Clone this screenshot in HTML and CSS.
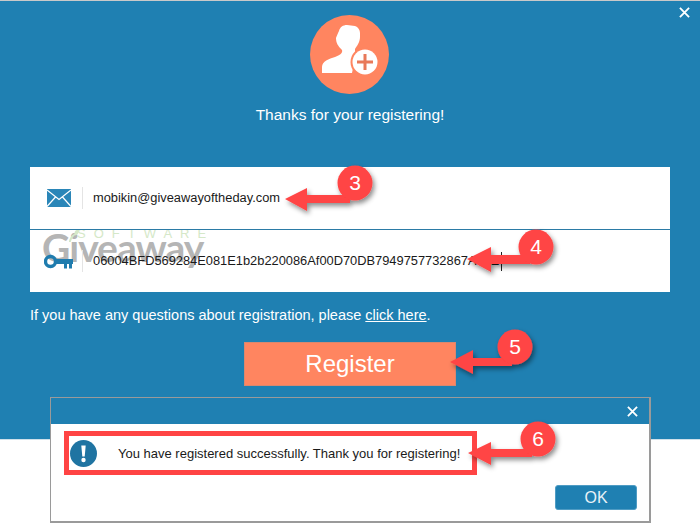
FILE: index.html
```html
<!DOCTYPE html>
<html>
<head>
    <meta name="viewport" content="width=device-width, initial-scale=1.0" />
    <meta charset="UTF-8" />
    <title>Register</title>
    <link rel="stylesheet" href="styles.css">
</head>
<body>
    <div class="window">
        <svg class="close main-close" viewBox="0 0 12 12"><path d="M1 1 L11 11 M11 1 L1 11"/></svg>
        <svg class="avatar" viewBox="310 15 80 80">
            <circle cx="349.5" cy="54.5" r="39.5" fill="#ff8560"/>
            <path fill="#fff" d="M322 73 V67 C322 61 329 59 335 57 C340 55 343 53 342 50 C338 46 336 43 336 38 C337 35 338 33 339 31 C340 27 343 25 347 25 C350 25 352 26 355 26 C358 27 360 30 360 33 V37 C360 42 357 46 355 49 L355 58 L352 73 Z"/>
            <circle cx="365" cy="62" r="14.5" fill="#ff8560"/>
            <circle cx="365" cy="62" r="12.5" fill="#fff"/>
            <path fill="none" stroke="#e8795a" stroke-width="3" d="M365 54 V70 M357 62 H373"/>
        </svg>
        <h1 class="title">Thanks for your registering!</h1>
        <div class="panel">
            <div class="watermark">
                <svg class="wm-leaf" viewBox="0 0 12 14"><path d="M1 14 C2 8 5 6 7 5 C7 2 9 1 12 0 C12 4 11 7 7 7 C5 9 4 11 3 14 Z"/></svg>
                <span class="wm-top">SOFTWARE</span>
                <span class="wm-name">Giveaway</span>
            </div>
            <div class="row">
                <svg class="row-icon" viewBox="0 0 24 18">
                    <rect width="24" height="18" fill="#2a86b8"/>
                    <path fill="none" stroke="#fff" stroke-width="1.2" d="M0 1 L12 10.5 L24 1 M0 17.5 L8.5 8 M24 17.5 L15.5 8"/>
                </svg>
                <span class="sep"></span>
                <span class="value">mobikin@giveawayoftheday.com</span>
            </div>
            <div class="row row-key">
                <svg class="row-icon key" viewBox="0 0 29 15">
                    <circle cx="6.5" cy="7.5" r="5" fill="none" stroke="#1f7cae" stroke-width="3.4"/>
                    <path fill="#1f7cae" d="M11 5 H29 V10 H28 V14.5 H25 V10 H23 V14.5 H20 V10 H11 Z"/>
                </svg>
                <span class="sep"></span>
                <span class="value">06004BFD569284E081E1b2b220086Af00D70DB7949757732867A72E</span>
                <span class="caret"></span>
            </div>
        </div>
        <p class="help">If you have any questions about registration, please <a href="#">click here</a>.</p>
        <button class="register" type="button">Register</button>
    </div>

    <div class="dialog">
        <div class="dialog-bar">
            <svg class="close" viewBox="0 0 12 12"><path d="M1 1 L11 11 M11 1 L1 11"/></svg>
        </div>
        <div class="dialog-body">
            <div class="message">
                <svg class="info" viewBox="0 0 27 27">
                    <circle cx="13.5" cy="13.5" r="13.5" fill="#1f74a2"/>
                    <path fill="#fff" d="M11.3 5.5 H15.7 L14.7 16.5 H12.3 Z"/>
                    <circle cx="13.5" cy="20" r="2.2" fill="#fff"/>
                </svg>
                <span>You have registered successfully. Thank you for registering!</span>
            </div>
            <div class="dialog-foot">
                <button class="ok" type="button">OK</button>
            </div>
        </div>
    </div>

    <!-- callouts drawn on top of the screenshot -->
    <svg class="callouts" viewBox="0 0 700 523">
        <defs>
            <filter id="shade" x="-30%" y="-30%" width="170%" height="170%">
                <feDropShadow dx="2" dy="3" stdDeviation="2.5" flood-color="#000" flood-opacity="0.45"/>
            </filter>
        </defs>
        <g filter="url(#shade)">
            <path d="M285 199 L307 188 V195 H350 V203 H307 V211 Z"/>
            <circle cx="355" cy="183" r="17.5"/>
        </g>
        <text x="355" y="190">3</text>
        <g filter="url(#shade)">
            <path d="M467 259 L491 247 V255 H530 V264 H491 V272 Z"/>
            <circle cx="536" cy="247" r="17.5"/>
        </g>
        <text x="536" y="254">4</text>
        <g filter="url(#shade)">
            <path d="M450 362 L473 350 V358 H512 V366 H473 V374 Z"/>
            <circle cx="515" cy="347" r="17.5"/>
        </g>
        <text x="515" y="354">5</text>
        <g filter="url(#shade)">
            <path d="M468 453 L491 442 V449 H532 V457 H491 V465 Z"/>
            <circle cx="538" cy="439" r="17.5"/>
        </g>
        <text x="538" y="446">6</text>
    </svg>
</body>
</html>
```

FILE: styles.css
```css
* {
    box-sizing: border-box;
}
body {
    margin: 0;
    position: relative;
    width: 700px;
    height: 523px;
    overflow: hidden;
    background-color: #ffffff;
    font-family: 'Liberation Sans', Arial, sans-serif;
}
svg {
    display: block;
}
.window {
    position: relative;
    display: flex;
    flex-direction: column;
    align-items: center;
    height: 440px;
    padding: 14px 30px 0;
    background-color: #1f80b2;
    border-top: 1px solid #c9c9c9;
    border-bottom: 1px solid #cfe0ea;
}
.close {
    width: 11px;
    height: 11px;
    fill: none;
    stroke: #ffffff;
    stroke-width: 2;
}
.main-close {
    position: absolute;
    top: 6px;
    right: 10px;
}
.avatar {
    width: 80px;
    height: 80px;
}
.title {
    margin: 10px 0 0;
    font-size: 15.5px;
    line-height: 20px;
    font-weight: normal;
    color: #ffffff;
}
.panel {
    position: relative;
    width: 640px;
    margin-top: 42px;
    background-color: #ffffff;
}
.row {
    position: relative;
    display: flex;
    align-items: center;
    height: 62px;
    padding-left: 17px;
}
.row-key {
    height: 63px;
    border-top: 1px solid #2b7ba6;
    padding-left: 14px;
}
.row-icon {
    width: 24px;
    height: 18px;
    margin-right: 11px;
}
.key {
    width: 29px;
    height: 15px;
    margin-right: 9px;
}
.sep {
    width: 1px;
    height: 22px;
    background-color: #e4e4e4;
}
.value {
    margin-left: 10px;
    margin-bottom: 2px;
    font-size: 12.85px;
    color: #1a1a1a;
}
.caret {
    width: 1px;
    height: 19px;
    margin-left: 2px;
    background-color: #222222;
}
.watermark {
    position: absolute;
    left: 12px;
    top: 61px;
    width: 170px;
}
.wm-leaf {
    position: absolute;
    left: 26px;
    top: 1px;
    width: 11px;
    height: 13px;
    fill: #d5e8c8;
}
.wm-top {
    display: block;
    padding-left: 35px;
    font-size: 13px;
    line-height: 11px;
    letter-spacing: 8px;
    color: #d5e8c8;
    white-space: nowrap;
}
.wm-name {
    display: block;
    margin-top: -11px;
    font-family: 'Lato', sans-serif;
    font-weight: 700;
    font-size: 39px;
    line-height: 38px;
    letter-spacing: -1px;
    color: #b5b5b5;
}
.help {
    align-self: flex-start;
    margin: 13px 0 0;
    font-size: 14.5px;
    line-height: 20px;
    color: #ffffff;
}
.help a {
    color: #ffffff;
}
.register {
    width: 212px;
    height: 44px;
    margin-top: 17px;
    padding: 0;
    background-color: #ff8560;
    border: 1px solid #d9886f;
    font-family: inherit;
    font-size: 24px;
    color: #ffffff;
}
.dialog {
    position: absolute;
    left: 50px;
    top: 397px;
    width: 601px;
    height: 126px;
    background-color: #ffffff;
    border: 1px solid #9a9a9a;
    border-right-width: 2px;
    border-bottom-width: 2px;
}
.dialog-bar {
    display: flex;
    align-items: center;
    justify-content: flex-end;
    height: 26px;
    padding-right: 11px;
    background-color: #1f80b2;
}
.dialog-body {
    padding: 7px 12px 0 13px;
}
.message {
    display: flex;
    align-items: center;
    width: 413px;
    height: 44px;
    padding-left: 1px;
    border: 5px solid #ff4444;
    font-size: 13px;
    color: #1a1a1a;
}
.info {
    width: 27px;
    height: 27px;
    margin-right: 21px;
}
.dialog-foot {
    display: flex;
    justify-content: flex-end;
    margin-top: 10px;
}
.ok {
    width: 82px;
    height: 25px;
    padding: 0;
    background-color: #1f80b2;
    border: 1px solid #4f9cc4;
    border-radius: 3px;
    font-family: inherit;
    font-size: 16px;
    color: #e8f2f7;
}
.callouts {
    position: absolute;
    left: 0;
    top: 0;
    width: 700px;
    height: 523px;
}
.callouts path,
.callouts circle {
    fill: #ff4444;
}
.callouts text {
    fill: #ffffff;
    font-size: 21px;
    text-anchor: middle;
}
```
